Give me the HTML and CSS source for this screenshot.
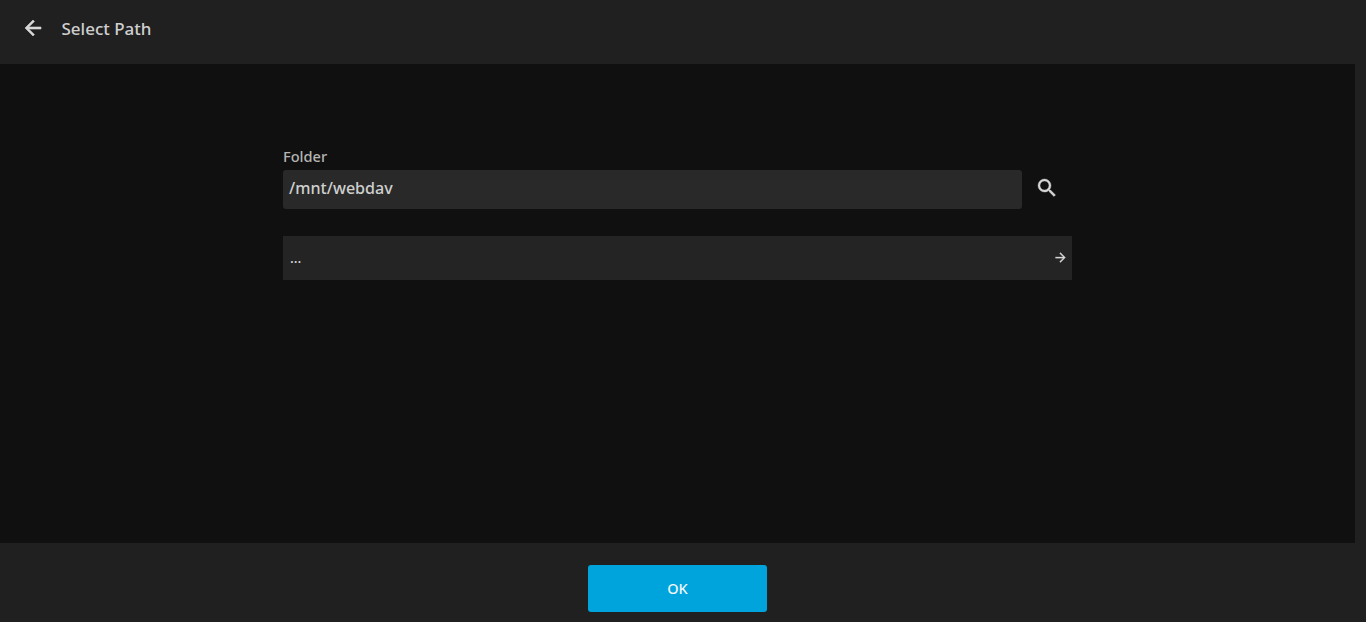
FILE: index.html
```html
<!DOCTYPE html>
<html lang="en">
<head>
<meta charset="utf-8">
<title>Select Path</title>
<link rel="stylesheet" href="styles.css">
</head>
<body>
<div class="app">
  <header class="topbar">
    <svg class="back" width="24" height="24" viewBox="0 0 24 24"><path d="M20 11H7.83l5.59-5.59L12 4l-8 8 8 8 1.41-1.41L7.83 13H20v-2z"/></svg>
    <h1 class="title">Select Path</h1>
  </header>
  <div class="middle">
    <main class="content">
      <div class="form">
        <label class="label">Folder</label>
        <div class="input-row">
          <div class="input">/mnt/webdav</div>
          <button class="search" aria-label="Search">
            <svg width="24" height="24" viewBox="0 0 24 24"><path d="M15.5 14h-.79l-.28-.27A6.471 6.471 0 0 0 16 9.5 6.5 6.5 0 1 0 9.5 16c1.61 0 3.09-.59 4.23-1.57l.27.28v.79l5 4.99L20.49 19l-4.99-5zm-6 0C7.01 14 5 11.99 5 9.5S7.01 5 9.5 5 14 7.01 14 9.5 11.99 14 9.5 14z"/></svg>
          </button>
        </div>
        <div class="row">
          <span class="row-text">...</span>
          <svg class="row-arrow" width="15" height="15" viewBox="0 0 24 24"><path d="M12 4l-1.41 1.41L16.17 11H4v2h12.17l-5.58 5.59L12 20l8-8z"/></svg>
        </div>
      </div>
    </main>
    <div class="gutter"></div>
  </div>
  <footer class="bottombar">
    <button class="ok">OK</button>
  </footer>
</div>
</body>
</html>
```
FILE: styles.css
```css
* { box-sizing: border-box; }
html, body { margin: 0; height: 100%; }
body { background: #202020; color: #d0d0d0; font-family: "Noto Sans", sans-serif; overflow: hidden; }
.app { display: flex; flex-direction: column; height: 622px; }
.topbar { height: 64px; flex: none; display: flex; align-items: center; background: #202020; padding: 0 0 9px 21px; }
.back { fill: #d6d6d6; stroke: #d6d6d6; stroke-width: 0.6; }
.title { margin: 2px 0 0 16.5px; font-size: 17px; font-weight: 500; color: #cfcfcf; }
.middle { flex: 1; display: flex; min-height: 0; }
.content { flex: 1; background: #101010; padding: 82px 0 0 283px; }
.gutter { width: 11px; flex: none; background: #202020; }
.form { width: 789px; }
.label { display: block; font-size: 14.6px; line-height: 20px; font-weight: 500; color: #b5b5b5; height: 24px; }
.input-row { display: flex; align-items: center; }
.input { width: 739px; height: 39px; background: #292929; border-radius: 3px; padding: 0 6px; font-size: 16.1px; font-weight: 500; line-height: 37px; color: #cfcfcf; }
.search { width: 50px; height: 39px; padding: 0 0 4px 0; background: none; border: 0; display: flex; align-items: center; justify-content: center; }
.search svg { fill: #d6d6d6; stroke: #d6d6d6; stroke-width: 0.4; }
.row { margin-top: 27px; height: 44px; background: #242424; display: flex; align-items: center; justify-content: space-between; padding: 0 4px 2px 7px; }
.row-text { font-size: 14px; font-weight: 500; color: #d6d6d6; }
.row-arrow { fill: #d6d6d6; stroke: #d6d6d6; stroke-width: 0.4; }
.bottombar { height: 79px; flex: none; background: #202020; display: flex; justify-content: center; padding: 22px 0 0 0; }
.ok { width: 179px; height: 47px; padding: 0 0 2px; background: #00a4dc; color: #f2f7fa; border: 0; border-radius: 3px; font: 500 14.5px "Noto Sans", sans-serif; margin-right: 11px; }
```
